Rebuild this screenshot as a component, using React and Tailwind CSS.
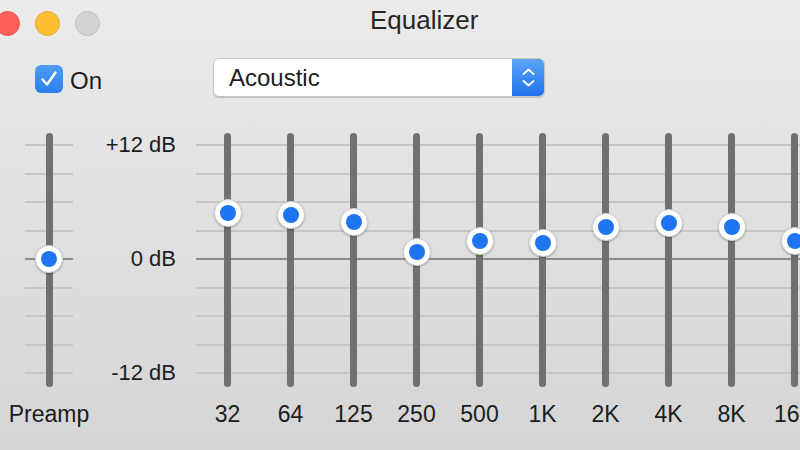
import React from "react";

// knob centre y (page px) for each band
const bands = [
  { label: "32", y: 213 },
  { label: "64", y: 215 },
  { label: "125", y: 222 },
  { label: "250", y: 252 },
  { label: "500", y: 241 },
  { label: "1K", y: 243 },
  { label: "2K", y: 227 },
  { label: "4K", y: 223 },
  { label: "8K", y: 227 },
  { label: "16K", y: 241 },
];

const TRACK_TOP = 133;

function Ticks() {
  return (
    <div className="absolute inset-x-0 top-[11px] h-[230px] flex flex-col justify-between">
      {[0, 1, 2, 3, 4, 5, 6, 7, 8].map((i) => (
        <div key={i} className={`h-[2px] w-full ${i === 4 ? "bg-[#8c8c8c]" : "bg-[#c6c6c6]"}`} />
      ))}
    </div>
  );
}

function Slider({ y, label, width }) {
  return (
    <div className={`flex flex-col items-center shrink-0 ${width}`}>
      <div className="relative h-[254px] w-full flex justify-center">
        <Ticks />
        <div className="relative w-[7px] h-full rounded-full bg-[#707070]" />
        <div
          className="absolute left-1/2 -translate-x-1/2 -translate-y-1/2 w-[28px] h-[28px] rounded-full bg-white border border-[#d2d2d2] shadow-[0_1px_2px_rgba(0,0,0,0.25)] flex items-center justify-center"
          style={{ top: y - TRACK_TOP }}
        >
          <div className="w-[16px] h-[16px] rounded-full bg-[#1f74ef]" />
        </div>
      </div>
      <span className="mt-[16px] text-[23px] leading-none text-[#1c1c1c] whitespace-nowrap">{label}</span>
    </div>
  );
}

export default function App() {
  return (
    <div className="w-[800px] h-[450px] overflow-hidden bg-gradient-to-b from-[#ebebeb] to-[#d5d5d5] font-['Liberation_Sans',Arial,sans-serif] text-[#1c1c1c]">
      {/* Title bar */}
      <div className="flex items-start h-[48px]">
        <div className="flex gap-[15px] -ml-[5px] mt-[11px] shrink-0">
          <div className="w-[25px] h-[25px] rounded-full bg-[#fc605a] border border-[#e5534d]" />
          <div className="w-[25px] h-[25px] rounded-full bg-[#fdbd33] border border-[#e6a82a]" />
          <div className="w-[25px] h-[25px] rounded-full bg-[#d3d3d3] border border-[#c2c2c2]" />
        </div>
        <span className="ml-[270px] mt-[7px] text-[26px] leading-none text-[#262626]">Equalizer</span>
      </div>

      {/* Controls row */}
      <div className="flex items-start h-[60px]">
        <div className="flex items-start ml-[35px] w-[178px] shrink-0">
          <div className="mt-[17px] w-[28px] h-[28px] rounded-[6px] bg-gradient-to-b from-[#4d9cf6] to-[#2a80ee] flex items-center justify-center">
            <svg width="20" height="20" viewBox="0 0 20 20" fill="none">
              <path d="M3.5 10.5 L8 15.5 L16.5 3.5" stroke="white" strokeWidth="2.4" strokeLinecap="round" strokeLinejoin="round" />
            </svg>
          </div>
          <span className="ml-[7px] mt-[21px] text-[24px] leading-none">On</span>
        </div>
        <div className="mt-[10px] w-[332px] h-[39px] rounded-[6px] bg-white border border-[#c6c6c6] shadow-[0_1px_1px_rgba(0,0,0,0.18)] flex overflow-hidden">
          <span className="self-center pl-[15px] text-[24px] leading-none">Acoustic</span>
          <div className="ml-auto w-[32px] bg-gradient-to-b from-[#5ba6f8] to-[#1e71ea] flex flex-col items-center justify-center gap-[5px]">
            <svg width="13" height="7" viewBox="0 0 13 7" fill="none">
              <path d="M1.5 6 L6.5 1.5 L11.5 6" stroke="white" strokeWidth="1.8" strokeLinecap="round" strokeLinejoin="round" />
            </svg>
            <svg width="13" height="7" viewBox="0 0 13 7" fill="none">
              <path d="M1.5 1 L6.5 5.5 L11.5 1" stroke="white" strokeWidth="1.8" strokeLinecap="round" strokeLinejoin="round" />
            </svg>
          </div>
        </div>
      </div>

      {/* Sliders */}
      <div className="flex items-start pt-[25px]">
        <div className="ml-[25px]">
          <Slider y={259} label="Preamp" width="w-[48px]" />
        </div>
        <div className="w-[103px] h-[254px] shrink-0">
          <div className="mt-[1px] h-[250px] flex flex-col justify-between items-end text-[22px] leading-none">
            <span>+12 dB</span>
            <span>0 dB</span>
            <span>-12 dB</span>
          </div>
        </div>
        <div className="ml-[20px] flex">
          {bands.map((b) => (
            <Slider key={b.label} y={b.y} label={b.label} width="w-[63px]" />
          ))}
        </div>
      </div>
    </div>
  );
}
